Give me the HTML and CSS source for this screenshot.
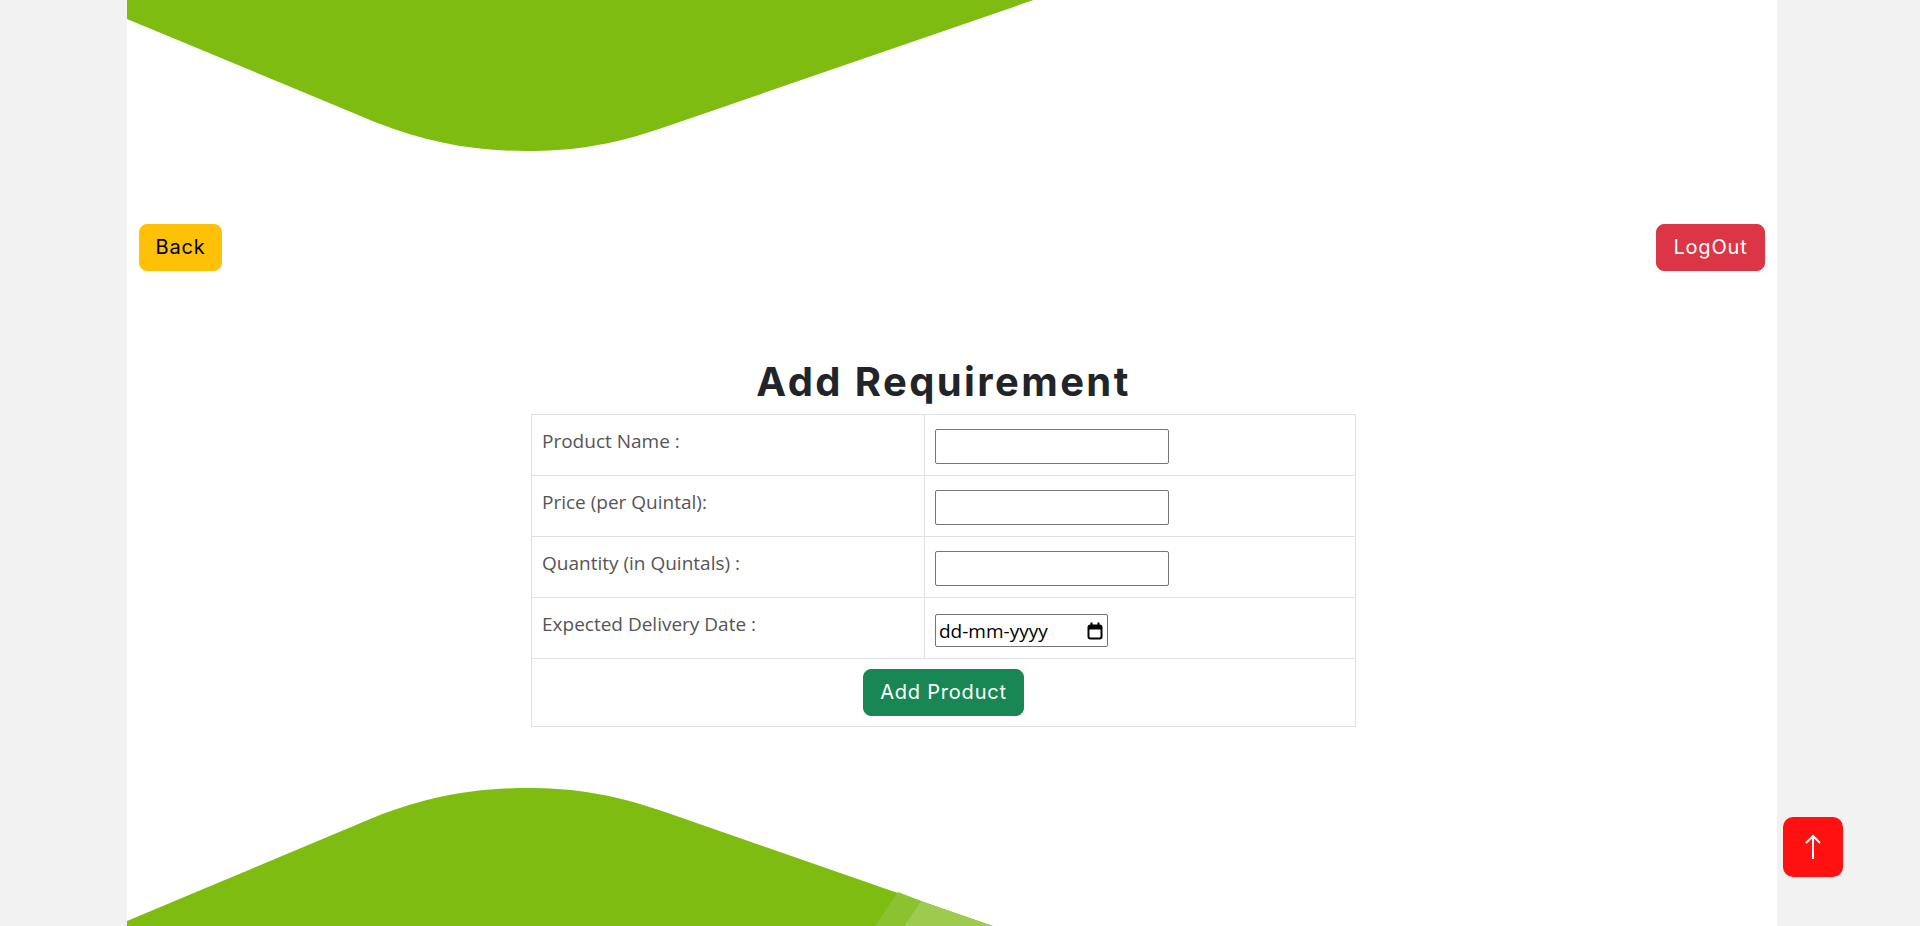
FILE: index.html
```html
<!DOCTYPE html>
<html lang="en">
<head>
    <meta charset="UTF-8">
    <meta name="viewport" content="width=device-width, initial-scale=1.0">
    <title>Add Requirement</title>
    <link rel="stylesheet" href="styles.css">
</head>
<body>
    <div class="page">
        <div class="wave wave-top">
            <svg viewBox="0 0 1650 790" preserveAspectRatio="none">
                <path d="M0,0 L1650,0 L1650,383 L538,766 C480,786 440,790 400,790 C340,790 290,779 236,756 L0,658 Z" fill="#7fbc12"/>
            </svg>
        </div>

        <nav class="actions">
            <a class="btn btn-back" href="#">Back</a>
            <a class="btn btn-logout" href="#">LogOut</a>
        </nav>

        <main class="requirement">
            <h1>Add Requirement</h1>
            <form id="requirementForm">
                <table>
                    <tr>
                        <td class="label">Product Name :</td>
                        <td class="field"><input type="text" name="product"></td>
                    </tr>
                    <tr>
                        <td class="label">Price (per Quintal):</td>
                        <td class="field"><input type="text" name="price"></td>
                    </tr>
                    <tr>
                        <td class="label">Quantity (in Quintals) :</td>
                        <td class="field"><input type="text" name="quantity"></td>
                    </tr>
                    <tr>
                        <td class="label">Expected Delivery Date :</td>
                        <td class="field field-date">
                            <span class="date-box">
                                <input type="text" name="date" placeholder="dd-mm-yyyy">
                                <svg class="calendar" viewBox="0 0 16 18" width="16" height="18">
                                    <rect x="1.5" y="3.5" width="13" height="13" rx="2" fill="none" stroke="#000" stroke-width="2"/>
                                    <rect x="1.5" y="3.5" width="13" height="4" fill="#000"/>
                                    <rect x="3.5" y="0.5" width="2" height="3" fill="#000"/>
                                    <rect x="10.5" y="0.5" width="2" height="3" fill="#000"/>
                                </svg>
                            </span>
                        </td>
                    </tr>
                    <tr>
                        <td class="submit-cell" colspan="2">
                            <button type="submit" class="btn btn-add">Add Product</button>
                        </td>
                    </tr>
                </table>
            </form>
        </main>

        <div class="wave wave-bottom">
            <svg viewBox="0 0 1650 545" preserveAspectRatio="none">
                <path d="M0,545 L0,133 L236,34 C290,11 340,0 400,0 C440,0 480,4 538,24 L1650,411 L1650,545 Z" fill="#7fbc12"/>
                <polygon points="771,104 794,113 502,545 473,545" fill="#8cc230"/>
                <polygon points="794,113 894,148 625,545 502,545" fill="#9ccb4e"/>
            </svg>
        </div>
    </div>

    <a class="to-top" href="#">
        <svg viewBox="0 0 24 26" width="24" height="26">
            <path d="M12,2 L12,25 M5,9 L12,2 L19,9" fill="none" stroke="#fff" stroke-width="2"/>
        </svg>
    </a>

    <script>
        document.getElementById('requirementForm').addEventListener('submit', function (event) {
            event.preventDefault();
        });
        window.scrollTo(0, 639);
    </script>
</body>
</html>
```

FILE: styles.css
```css
body {
    margin: 0;
    padding-right: 17px; /* room the scrollbar takes */
    background-color: #f2f2f2;
    font-family: "Open Sans", Arial, sans-serif;
    color: #212529;
}
.page {
    max-width: 1650px;
    margin: 0 auto;
    background-color: #fff;
}
.wave svg {
    display: block;
    width: 100%;
}
.wave-top svg {
    height: 790px;
}
.wave-bottom {
    margin-top: 61px;
}
.wave-bottom svg {
    height: 545px;
}
.actions {
    display: flex;
    justify-content: space-between;
    padding: 0 12px;
    margin-top: 73px;
}
.btn {
    display: inline-block;
    font-family: Inter, sans-serif;
    font-size: 20px;
    line-height: 29px;
    letter-spacing: 0.8px;
    padding: 8px 16px;
    border: 1px solid transparent;
    border-radius: 8px;
    text-decoration: none;
    cursor: pointer;
}
.btn-back {
    background-color: #ffc107; /* Warning yellow */
    border-color: #ffc107;
    color: #000;
}
.btn-logout {
    background-color: #dc3545; /* Danger red */
    border-color: #dc3545;
    color: #fff;
}
.btn-add {
    background-color: #198754; /* Success green */
    border-color: #198754;
    color: #fff;
}
.requirement {
    margin-top: 87px;
    padding-right: 16px;
}
.requirement h1 {
    margin: 0 0 8px;
    text-align: center;
    font-family: Inter, sans-serif;
    font-size: 40px;
    line-height: 48px;
    font-weight: 700;
    letter-spacing: 2.4px;
    color: #212529;
}
.requirement table {
    width: 825px;
    margin: 0 auto;
    border-collapse: collapse;
}
.requirement td {
    border: 1px solid #dee2e6;
    vertical-align: top;
}
.label {
    width: 372px;
    padding: 12px 10px 0;
    font-size: 19px;
    line-height: 28px;
    color: #555;
}
.field {
    padding: 14px 10px 11px;
}
.field input {
    display: block;
    box-sizing: border-box;
    width: 234px;
    height: 35px;
    border: 1px solid #767676;
    border-radius: 2px;
    padding: 1px 3px;
    font-family: "Open Sans", Arial, sans-serif;
    font-size: 18px;
}
.field-date {
    padding-top: 16px;
}
.date-box {
    display: flex;
    align-items: center;
    box-sizing: border-box;
    width: 173px;
    height: 33px;
    padding: 0 4px 0 3px;
    border: 1px solid #767676;
    border-radius: 2px;
}
.field .date-box input {
    flex: 1;
    width: auto;
    min-width: 0;
    height: 31px;
    border: none;
    padding: 0;
    font-size: 19px;
    color: #000;
}
.date-box input::placeholder {
    color: #000;
    opacity: 1;
}
.calendar {
    flex-shrink: 0;
}
.submit-cell {
    padding: 10px;
    text-align: center;
}
.to-top {
    position: fixed;
    right: 77px;
    bottom: 49px;
    display: flex;
    align-items: center;
    justify-content: center;
    width: 60px;
    height: 60px;
    border-radius: 10px;
    background-color: #ff1111;
}
```
